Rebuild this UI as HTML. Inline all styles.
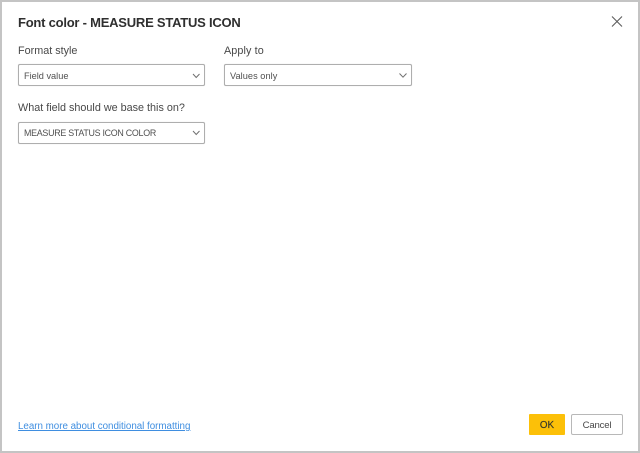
<!DOCTYPE html>
<html><head><meta charset="utf-8">
<style>
html,body{margin:0;padding:0;background:#fff}
body{width:640px;height:453px;position:relative;overflow:hidden;font-family:"Liberation Sans",sans-serif}
.abs{position:absolute;white-space:nowrap;filter:blur(.3px)}
.bt{position:absolute;left:0;top:0;width:640px;height:2px;background:#c4c4c4}
.bl{position:absolute;left:0;top:0;width:2px;height:453px;background:#c4c4c4}
.br{position:absolute;left:638px;top:0;width:2px;height:453px;background:#c4c4c4}
.bb{position:absolute;left:0;top:451px;width:640px;height:2px;background:#c4c4c4}
.sel{position:absolute;box-sizing:border-box;height:22px;border:1px solid #aeaeae;border-radius:2px;background:#fff;box-shadow:0 0 .6px #bbb}
.lab{font-size:10.8px;color:#484848;line-height:14px}
.val{font-size:9.2px;color:#505050;line-height:12px}
</style></head><body>
<div class="bt"></div><div class="bl"></div><div class="br"></div><div class="bb"></div>
<div class="abs" style="left:18px;top:15px;font-size:13px;font-weight:bold;letter-spacing:-.23px;color:#2f2f2f;line-height:16px">Font color - MEASURE STATUS ICON</div>
<svg style="position:absolute;left:611px;top:15px" width="12" height="13" viewBox="0 0 12 13"><path d="M1 1.5L11 11.5M11 1.5L1 11.5" stroke="#5c5c5c" stroke-width="1.1" fill="none"/></svg>

<div class="abs lab" style="left:18px;top:44px">Format style</div>
<div class="abs lab" style="left:224px;top:44px;letter-spacing:.1px">Apply to</div>
<div class="sel" style="left:18px;top:64px;width:187px"></div>
<div class="abs val" style="left:24px;top:70px">Field value</div>
<svg style="position:absolute;left:192px;top:73px" width="9" height="6" viewBox="0 0 9 6"><path d="M1 1L4.2 4.5L7.5 1" stroke="#707070" stroke-width="1" fill="none"/></svg>
<div class="sel" style="left:224px;top:64px;width:188px"></div>
<div class="abs val" style="left:230px;top:70px;letter-spacing:.05px">Values only</div>
<svg style="position:absolute;left:398px;top:72px" width="10" height="7" viewBox="0 0 10 7"><path d="M1.5 1.5L5 5.2L8.5 1.5" stroke="#707070" stroke-width="1" fill="none"/></svg>

<div class="abs lab" style="left:18px;top:101px">What field should we base this on?</div>
<div class="sel" style="left:18px;top:122px;width:187px"></div>
<div class="abs val" style="left:24px;top:127px;font-size:8.9px;letter-spacing:-.27px">MEASURE STATUS ICON COLOR</div>
<svg style="position:absolute;left:192px;top:130px" width="9" height="6" viewBox="0 0 9 6"><path d="M1 1L4.2 4.5L7.5 1" stroke="#707070" stroke-width="1" fill="none"/></svg>

<div class="abs" style="left:18px;top:420px;font-size:9.8px;letter-spacing:-.02px;line-height:13px;color:#3f8ee0;text-decoration:underline">Learn more about conditional formatting</div>

<div style="position:absolute;left:529px;top:414px;width:36px;height:21px;background:#fcc008;border-radius:1px"></div>
<div class="abs" style="left:529px;width:36px;text-align:center;top:419px;font-size:9.8px;line-height:14px;color:#3a3a2a;-webkit-text-stroke:.2px #3a3a2a">OK</div>
<div style="position:absolute;box-sizing:border-box;left:571px;top:414px;width:52px;height:21px;border:1px solid #b8b8b8;border-radius:2px;background:#fff"></div>
<div class="abs" style="left:571px;width:52px;text-align:center;top:419px;font-size:9.6px;letter-spacing:-.2px;line-height:14px;color:#484848">Cancel</div>
</body></html>
